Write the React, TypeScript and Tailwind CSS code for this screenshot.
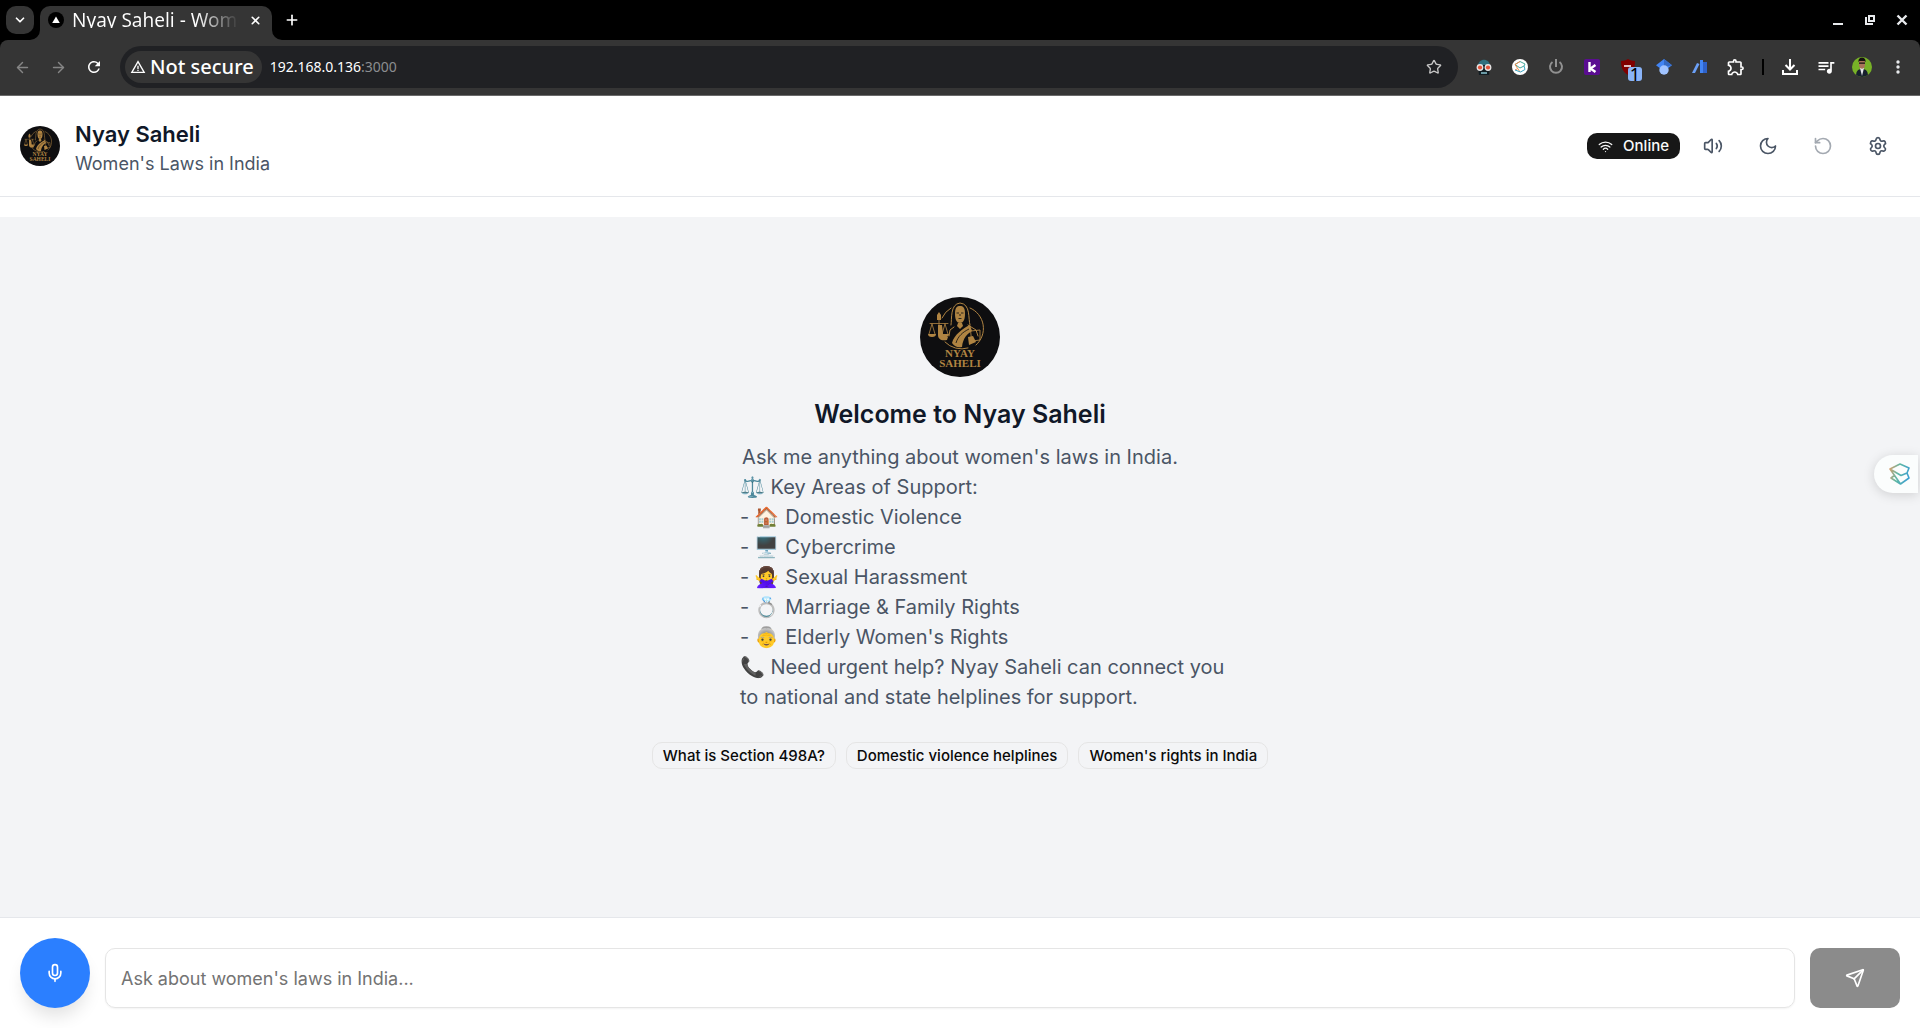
import {
    ArrowLeft,
    ArrowRight,
    ChevronDown,
    Mic,
    Plus,
    RotateCcw,
    Send,
    Settings,
    Star,
    Volume2,
    Wifi,
    X,
} from "lucide-react";
import { MdOutlineExtension, MdQueueMusic, MdRefresh, MdWarningAmber } from "react-icons/md";
import type { ReactNode } from "react";

const SUPPORT_AREAS = [
    "⚖️ Key Areas of Support:",
    "- 🏠 Domestic Violence",
    "- 🖥️ Cybercrime",
    "- 🙅‍♀️ Sexual Harassment",
    "- 💍 Marriage & Family Rights",
    "- 👵 Elderly Women's Rights",
    "📞 Need urgent help? Nyay Saheli can connect you to national and state helplines for support.",
];

const SUGGESTIONS = ["What is Section 498A?", "Domestic violence helplines", "Women's rights in India"];

const Logo = ({ className }: { className: string }) => (
    <svg viewBox="0 0 80 80" className={className} role="img" aria-label="Nyay Saheli logo">
        <circle cx="40" cy="40" r="40" fill="#0e0e10" />
        <g fill="none" stroke="#b08442" strokeLinecap="round">
            <path d="M50 11a22 22 0 0 1 6 37M31 11a22 22 0 0 0-9 10M25 45a23 23 0 0 0 23 6" strokeWidth="1" />
            {/* scales */}
            <path d="M10 26.500h18M19 20v8M12 27l-3 10M12 27l3 10M25 27l-3 10M25 27l3 10" strokeWidth="0.800" />
            {/* hair and veil */}
            <path d="M31 28c1-6-1-21 9-22 11 1 8 16 10 22" strokeWidth="1" />
            <path d="M34 30l-4 3-1 6M48 28l8 5 2 6" strokeWidth="1" />
            <path d="M51 34l9-1v10l-8 1z" strokeWidth="0.900" />
        </g>
        <g fill="#b08442">
            <path d="M8 37h8a4 3 0 0 1-8 0zM21 37h8a4 3 0 0 1-8 0z" />
            <path d="M17 18l2-3 2 3v5h-4zM18 28h4l1 9 5 3-1 3c-6 1-9-1-9-5z" />
            <path d="M35 17c0-7 2-8 5-8s5 1 5 8c0 6-2 9-5 9s-5-3-5-9z" />
            <path d="M38 26h4l1 3-3 3-3-3z" />
            <path d="M50 28c-7 3-16 10-18 18 3 4 6 5 10 4 1-9 5-13 10-16z" />
            <path d="M48 40l5-1 3 6-7 3z" />
        </g>
        <g fill="none" stroke="#0e0e10" strokeWidth="0.800">
            <path d="M36.500 16h2.500M41 16h2.500M38.500 21.500h3M40 17v2M36 46c2-7 7-11 13-14" />
        </g>
        <g fill="#b08442" fontFamily="'Liberation Serif', serif" fontWeight="700" textAnchor="middle" fontSize="11">
            <text x="40" y="60">NYAY</text>
            <text x="40" y="70">SAHELI</text>
        </g>
    </svg>
);

const Moon = () => (
    <svg width="20" height="20" viewBox="0 0 24 24" fill="none" stroke="currentColor" strokeWidth="2" strokeLinecap="round" strokeLinejoin="round">
        <path d="M12 3a6 6 0 0 0 9 9 9 9 0 1 1-9-9Z" />
    </svg>
);

const ToolbarButton = ({ label, children }: { label: string; children: ReactNode }) => (
    <button aria-label={label} className="flex h-9 w-9 shrink-0 items-center justify-center">
        {children}
    </button>
);

const TabStrip = () => (
    <div className="flex h-10 items-end bg-black text-white">
        <button aria-label="Search tabs" className="mb-[6px] ml-[6px] flex h-7 w-7 items-center justify-center rounded-[10px] bg-[#353535]">
            <ChevronDown size={14} strokeWidth={3} />
        </button>
        <div className="relative ml-[6px] flex h-[34px] w-[232px] items-center rounded-t-[10px] bg-[#353535] pr-[9px] pb-[6px] pl-2">
            {/* flared feet of the active tab */}
            <svg className="absolute bottom-0 -left-[10px]" width="10" height="10" viewBox="0 0 10 10">
                <path d="M10 0v10H0A10 10 0 0 0 10 0z" fill="#353535" />
            </svg>
            <svg className="absolute -right-[10px] bottom-0" width="10" height="10" viewBox="0 0 10 10">
                <path d="M0 0v10h10A10 10 0 0 1 0 0z" fill="#353535" />
            </svg>
            <svg width="16" height="16" viewBox="0 0 16 16" className="shrink-0">
                <circle cx="8" cy="8" r="8" fill="#000" />
                <path d="M8 4.500l3.800 6.500H4.200z" fill="#fff" />
            </svg>
            <div className="ml-2 h-4 flex-1 overflow-hidden bg-linear-to-r from-white from-75% to-transparent bg-clip-text text-[19px] leading-4 whitespace-nowrap text-transparent">
                Nyay Saheli - Women's Laws
            </div>
            <button aria-label="Close tab" className="ml-2 flex h-4 w-4 items-center justify-center">
                <X size={13} strokeWidth={3} />
            </button>
        </div>
        <button aria-label="New tab" className="mb-[6px] ml-[6px] flex h-7 w-7 items-center justify-center">
            <Plus size={16} strokeWidth={2.5} />
        </button>
        <div className="mb-[6px] ml-auto flex h-7 items-center pr-[2px]">
            <button aria-label="Minimise" className="flex h-7 w-8 items-center justify-center">
                <svg width="12" height="12" viewBox="0 0 12 12"><path d="M1 9h10v2H1z" fill="#e8eaed" /></svg>
            </button>
            <button aria-label="Restore" className="flex h-7 w-8 items-center justify-center">
                <svg width="12" height="12" viewBox="0 0 12 12" fill="none" stroke="#e8eaed" strokeWidth="2">
                    <path d="M5 2h5v5H5zM2 3v7h7" />
                </svg>
            </button>
            <button aria-label="Close window" className="flex h-7 w-8 items-center justify-center">
                <svg width="12" height="12" viewBox="0 0 12 12" stroke="#e8eaed" strokeWidth="2.400"><path d="M1.500 1.500l9 9M10.500 1.500l-9 9" /></svg>
            </button>
        </div>
    </div>
);

const Toolbar = () => (
    <div className="bg-black">
        <div className="flex h-14 items-center rounded-t-lg border-b border-[#6a6a6a] bg-[#353535] px-1 pb-px text-white">
            <ToolbarButton label="Back"><ArrowLeft size={17} className="text-[#868686]" /></ToolbarButton>
            <ToolbarButton label="Forward"><ArrowRight size={17} className="text-[#868686]" /></ToolbarButton>
            <ToolbarButton label="Reload"><MdRefresh size={18} /></ToolbarButton>
            <div className="mx-2 flex h-[42px] flex-1 items-center rounded-full bg-[#202124] pr-[6px] pl-[5px]">
                <button className="flex h-8 items-center gap-1 rounded-full bg-[#353535] pr-2 pl-[5px] text-xl leading-7 font-medium whitespace-nowrap">
                    <MdWarningAmber size={16} />
                    Not secure
                </button>
                <a href="#" className="ml-2 flex-1 text-sm">
                    192.168.0.136<span className="text-[#8b8d90]">:3000</span>
                </a>
                <ToolbarButton label="Bookmark"><Star size={16} className="text-[#c7c7c7]" /></ToolbarButton>
            </div>
            <ToolbarButton label="Robot extension">
                <svg width="16" height="16" viewBox="0 0 16 16">
                    <path d="M2 7C2-1.500 14-1.500 14 7z" fill="#2f6f7e" />
                    <path d="M2 6h12l-1 10H3z" fill="#111c22" />
                    <path d="M5 13h6v2H5z" fill="#6b9aa5" />
                    <circle cx="4" cy="8.500" r="3.400" fill="#e6e6e6" />
                    <circle cx="12" cy="8.500" r="3.400" fill="#e6e6e6" />
                    <circle cx="4" cy="8.500" r="2.100" fill="#e2543b" />
                    <circle cx="12" cy="8.500" r="2.100" fill="#e2543b" />
                </svg>
            </ToolbarButton>
            <ToolbarButton label="Sider extension">
                <svg width="16" height="16" viewBox="0 0 16 16" fill="none" strokeWidth="1">
                    <circle cx="8" cy="8" r="8" fill="#fff" />
                    <path d="M3 5.500l5-3 5 2.500-1 2-4 2z" stroke="#45a99c" />
                    <path d="M8 2.500l-5 3 5 7.500M3 11l2-1" stroke="#ee8b4a" />
                    <path d="M12 7l1 3.500L8.500 13 3 11" stroke="#3aa6c4" />
                </svg>
            </ToolbarButton>
            <ToolbarButton label="Power extension">
                <svg width="16" height="16" viewBox="0 0 16 16" fill="none" stroke="#919191" strokeWidth="2">
                    <path d="M8 0v8M4.500 3a6 6 0 1 0 7 0" />
                </svg>
            </ToolbarButton>
            <ToolbarButton label="Keepa extension">
                <span className="flex h-4 w-4 items-center justify-center rounded-xs bg-[#5a0d91]">
                    <svg width="10" height="12" viewBox="0 0 10 12" stroke="#fff" strokeWidth="2.400" fill="none">
                        <path d="M2.500 1v10M8.500 4L3.500 7.500l5 3.500" />
                    </svg>
                </span>
            </ToolbarButton>
            <ToolbarButton label="Ad blocker, 1 blocked">
                <span className="relative">
                    <svg width="16" height="16" viewBox="0 0 16 16">
                        <path d="M8 0c2 1 4 2 7 2 0 7-2 11-7 14C3 13 1 9 1 2c3 0 5-1 7-2z" fill="#800000" />
                        <path d="M4 7h7" stroke="#fff" strokeWidth="1.500" />
                    </svg>
                    <span className="absolute top-2 left-2 h-[14px] w-[14px] rounded-[3px] bg-[#8ab4f8] text-lg leading-[14px] text-black">1</span>
                </span>
            </ToolbarButton>
            <ToolbarButton label="Scholar extension">
                <svg width="16" height="16" viewBox="0 0 16 16">
                    <path d="M8 0l8 6.200-8 6-8-6z" fill="#4285f4" />
                    <path d="M8 0v8l8-1.800z" fill="#356ac3" />
                    <circle cx="8" cy="11" r="4.700" fill="#a0c3ff" />
                </svg>
            </ToolbarButton>
            <ToolbarButton label="Library extension">
                <svg width="16" height="16" viewBox="0 0 16 16">
                    <path d="M5 4l2.500 1L3 14H0z" fill="#6ba0f7" />
                    <path d="M8 1h3v13H8z" fill="#4285f4" />
                    <path d="M11 3h4v11h-4z" fill="#2f62c9" />
                </svg>
            </ToolbarButton>
            <ToolbarButton label="Extensions"><MdOutlineExtension size={20} /></ToolbarButton>
            <span className="mx-2 h-4 w-[2px] bg-black" />
            <ToolbarButton label="Downloads">
                <svg width="16" height="16" viewBox="0 0 16 16" fill="none" stroke="#fff" strokeWidth="2">
                    <path d="M8 0v10M3.500 6L8 10.500 12.500 6M1 11v4h14v-4" />
                </svg>
            </ToolbarButton>
            <ToolbarButton label="Media controls"><MdQueueMusic size={20} /></ToolbarButton>
            <ToolbarButton label="Profile">
                <svg width="20" height="20" viewBox="0 0 20 20">
                    <clipPath id="avatar"><circle cx="10" cy="10" r="10" /></clipPath>
                    <g clipPath="url(#avatar)">
                        <path d="M0 0h20v20H0z" fill="#78b227" />
                        <path d="M4 20c0-5 1-8 6-8s6 3 6 8z" fill="#17202e" />
                        <path d="M8 11h4l-2 8z" fill="#e5e7eb" />
                        <path d="M7 4h6v4c0 5-6 5-6 0z" fill="#a8735a" />
                        <path d="M6.500 5c-1-6 8-6 7 0l-1-1h-5z" fill="#16120f" />
                        <path d="M7 6.200h6" stroke="#16120f" strokeWidth="1.200" />
                    </g>
                </svg>
            </ToolbarButton>
            <ToolbarButton label="Menu">
                <svg width="4" height="16" viewBox="0 0 4 16" fill="#e8eaed">
                    <circle cx="2" cy="3" r="1.700" /><circle cx="2" cy="8" r="1.700" /><circle cx="2" cy="13" r="1.700" />
                </svg>
            </ToolbarButton>
        </div>
    </div>
);

const HeaderButton = ({ label, children }: { label: string; children: ReactNode }) => (
    <button aria-label={label} className="flex h-[45px] w-[45px] items-center justify-center rounded-lg text-[#4a5565] hover:bg-gray-100">
        {children}
    </button>
);

const Header = () => (
    <header className="flex items-center justify-between border-b border-gray-200 bg-white p-5">
        <div className="flex items-center gap-[15px]">
            <Logo className="h-10 w-10" />
            <div>
                <h1 className="text-[22px] leading-9 font-semibold text-[#101828]">Nyay Saheli</h1>
                <p className="text-lg leading-6 text-[#4a5565]">Women's Laws in India</p>
            </div>
        </div>
        <div className="flex items-center gap-[10px]">
            <span className="flex h-[26px] items-center gap-[10px] rounded-[10px] bg-[#171717] px-[11px] text-[15px] font-medium text-neutral-50">
                <Wifi size={15} />
                Online
            </span>
            <HeaderButton label="Sound"><Volume2 size={20} /></HeaderButton>
            <HeaderButton label="Dark mode"><Moon /></HeaderButton>
            <HeaderButton label="Reset chat"><RotateCcw size={20} className="opacity-50" /></HeaderButton>
            <HeaderButton label="Settings"><Settings size={20} /></HeaderButton>
        </div>
    </header>
);

const Welcome = () => (
    <main className="mt-5 flex flex-1 flex-col items-center bg-[#f3f4f6] pt-20 text-[#4a5565]">
        <Logo className="h-20 w-20" />
        <h2 className="mt-5 mb-[10px] text-[25px] leading-[35px] font-semibold text-[#101828]">Welcome to Nyay Saheli</h2>
        <div className="w-full max-w-[560px] text-xl leading-[30px]">
            <p className="text-center">Ask me anything about women's laws in India.</p>
            <div className="pl-[60px]">
                {SUPPORT_AREAS.map((line) => (
                    <p key={line}>{line}</p>
                ))}
            </div>
        </div>
        <div className="mt-[30px] flex flex-wrap justify-center gap-[10px]">
            {SUGGESTIONS.map((text) => (
                <button key={text} className="h-[27px] rounded-[10px] border border-[#e5e5e5] px-[10px] text-[15px] leading-5 font-medium text-neutral-950">
                    {text}
                </button>
            ))}
        </div>
    </main>
);

const Composer = () => (
    <form className="flex items-end gap-[15px] border-t border-gray-200 bg-white p-5" onSubmit={(e) => e.preventDefault()}>
        <button type="button" aria-label="Speak" className="flex h-[70px] w-[70px] shrink-0 items-center justify-center rounded-full bg-[#2b7fff] text-white shadow-[0_12px_18px_-4px_rgba(0,0,0,0.12)]">
            <Mic size={20} />
        </button>
        <input
            aria-label="Your question"
            placeholder="Ask about women's laws in India..."
            className="h-[60px] min-w-0 flex-1 rounded-[10px] border border-[#e5e5e5] px-[15px] text-lg shadow-xs outline-none placeholder:text-[#737373]"
        />
        <button aria-label="Send" className="flex h-[60px] w-[90px] shrink-0 items-center justify-center rounded-[10px] bg-[#8b8b8b] text-white">
            <Send size={20} />
        </button>
    </form>
);

export default function App() {
    return (
        <div className="flex min-h-screen flex-col bg-white font-['Inter','Noto_Color_Emoji',sans-serif]">
            <div className="font-['Noto_Sans',sans-serif]">
                <TabStrip />
                <Toolbar />
            </div>
            <Header />
            <Welcome />
            <Composer />
            {/* floating assistant handle */}
            <button aria-label="Open assistant" className="fixed top-[455px] right-[2px] flex h-[38px] w-11 items-center justify-center rounded-l-full bg-[#fbfdfd] pl-2 shadow-[0_2px_12px_rgba(0,0,0,0.15)]">
                <svg width="22" height="24" viewBox="0 0 22 24" fill="none" strokeWidth="1.600" strokeLinejoin="round">
                    <defs>
                        <linearGradient id="handle" x1="0" y1="0" x2="22" y2="6" gradientUnits="userSpaceOnUse">
                            <stop offset="0" stopColor="#f29a62" />
                            <stop offset="0.500" stopColor="#5fb8a5" />
                            <stop offset="1" stopColor="#3d9fd0" />
                        </linearGradient>
                    </defs>
                    <path d="M1 7l10-5 9 4-2 5-6 2.500zM18 11l2 5-8.500 6L2 16l4-3M1 7l10.500 15" stroke="url(#handle)" />
                </svg>
            </button>
        </div>
    );
}
